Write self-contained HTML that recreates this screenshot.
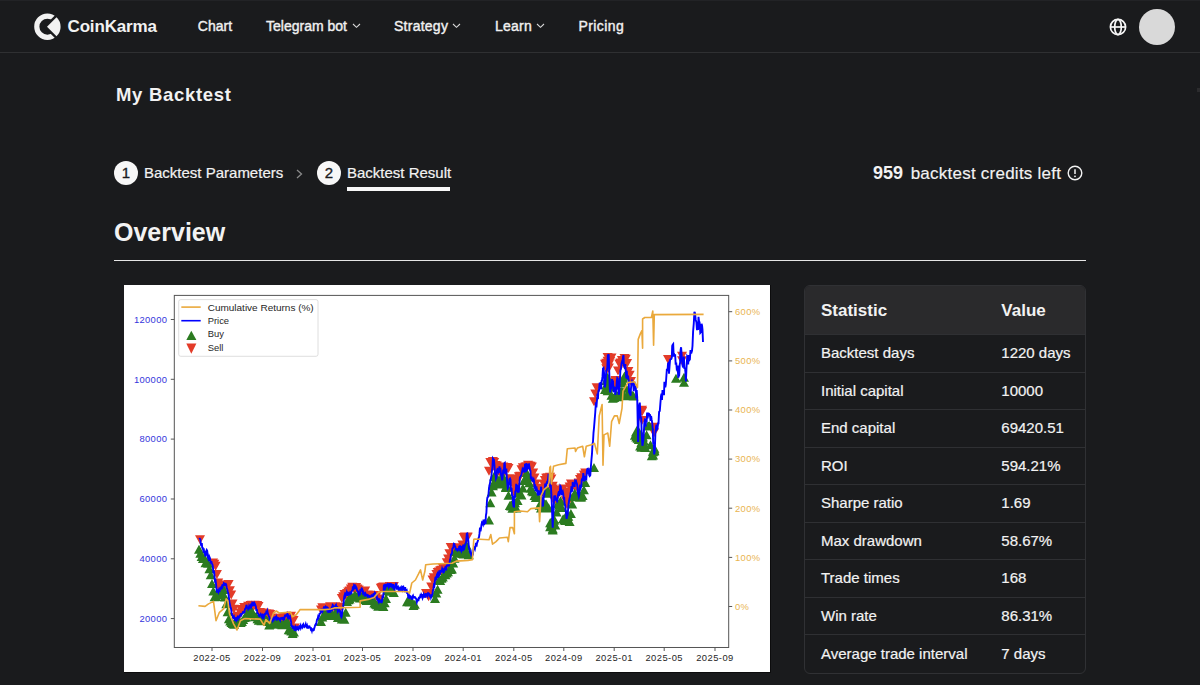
<!DOCTYPE html>
<html><head><meta charset="utf-8">
<style>
*{margin:0;padding:0;box-sizing:border-box}
html,body{width:1200px;height:685px;overflow:hidden;background:#1a1b1d;font-family:"Liberation Sans",sans-serif;color:#f2f2f2}
.abs{position:absolute;white-space:nowrap}
#hdr{position:absolute;left:0;top:0;width:1200px;height:53px;border-bottom:1px solid #2f3032}
.nav{position:absolute;top:18.2px;font-size:14px;line-height:17px;color:#f0f0f0;-webkit-text-stroke:0.4px #f0f0f0}
.chev{position:absolute;top:23px;width:9px;height:6px}
.step{position:absolute;width:24px;height:24px;border-radius:50%;background:#f7f7f7;color:#1a1b1d;font-size:15px;line-height:24px;text-align:center;-webkit-text-stroke:0.35px #1a1b1d}
table{position:absolute;left:804px;top:285px;width:282px;height:386px;border-collapse:separate;border-spacing:0;border:1px solid #303134;border-radius:6px;overflow:hidden}
td,th{text-align:left;border-bottom:1px solid #2f3033;font-size:15px;height:37.5px;padding:0 0 1px 16px;color:#f2f2f2}
td{-webkit-text-stroke:0.2px #f2f2f2}
th{background:#2a2a2c;height:49px;font-size:17px;font-weight:bold;padding-top:2px}
tr:last-child td{border-bottom:none}
td.v,th.v{padding-left:0}
</style></head><body>
<div id="hdr"><div class="abs" style="left:0;top:0;width:1200px;height:1px;background:#222326"></div>
  <svg class="abs" style="left:33px;top:12px" width="30" height="30" viewBox="33 12 30 30">
    <circle cx="47.4" cy="26.7" r="10.6" fill="none" stroke="#f2f2f2" stroke-width="5.2"/>
    <path d="M43.6 26.7L63 7.3V46.1Z" fill="#1a1b1d"/>
    <path d="M47 26.7L56.53 17.17A13.2 13.2 0 0 1 56.53 36.23Z" fill="#f2f2f2"/>
  </svg>
  <div class="abs" style="left:67.5px;top:16px;font-size:17px;font-weight:bold;line-height:22px;color:#f2f2f2;letter-spacing:-0.15px">CoinKarma</div>
  <div class="nav abs" style="left:197.8px">Chart</div>
  <div class="nav abs" style="left:266px">Telegram bot</div>
  <svg class="chev" style="left:352px" viewBox="0 0 9 6"><path d="M1 1L4.5 4.3L8 1" fill="none" stroke="#d8d8d8" stroke-width="1.1"/></svg>
  <div class="nav abs" style="left:394px;letter-spacing:0.25px">Strategy</div>
  <svg class="chev" style="left:452px" viewBox="0 0 9 6"><path d="M1 1L4.5 4.3L8 1" fill="none" stroke="#d8d8d8" stroke-width="1.1"/></svg>
  <div class="nav abs" style="left:495px;letter-spacing:0.25px">Learn</div>
  <svg class="chev" style="left:536px" viewBox="0 0 9 6"><path d="M1 1L4.5 4.3L8 1" fill="none" stroke="#d8d8d8" stroke-width="1.1"/></svg>
  <div class="nav abs" style="left:578.5px;letter-spacing:0.4px">Pricing</div>
  <svg class="abs" style="left:1107.5px;top:16.6px" width="20" height="20" viewBox="0 0 20 20" fill="none" stroke="#f7f7f7" stroke-width="1.7">
    <circle cx="10" cy="10" r="7.6"/><path d="M2.4 10H17.6"/><ellipse cx="10" cy="10" rx="3.3" ry="7.6"/>
  </svg>
  <div class="abs" style="left:1138.5px;top:8.6px;width:36px;height:36px;border-radius:50%;background:#d9d9d9"></div>
</div>

<div class="abs" style="left:116px;top:83.6px;font-size:18.5px;line-height:22px;font-weight:bold;letter-spacing:0.7px">My Backtest</div>

<div class="step" style="left:114px;top:161px">1</div>
<div class="abs" style="left:144px;top:164px;font-size:15px;line-height:18px;-webkit-text-stroke:0.2px #f2f2f2">Backtest Parameters</div>
<svg class="abs" style="left:295px;top:169px" width="9" height="10" viewBox="0 0 9 10"><path d="M2 1L6.5 5L2 9" fill="none" stroke="#8a8a8a" stroke-width="1.3"/></svg>
<div class="step" style="left:317px;top:161px">2</div>
<div class="abs" style="left:347px;top:164px;font-size:15px;line-height:18px;-webkit-text-stroke:0.2px #f2f2f2">Backtest Result</div>
<div class="abs" style="left:347px;top:187px;width:103px;height:4px;background:#f7f7f7"></div>

<div class="abs" style="left:873px;top:163px;font-size:17px;line-height:20px"><b style="font-size:18px">959</b><span style="letter-spacing:0.24px;margin-left:7.6px;-webkit-text-stroke:0.15px #f2f2f2">backtest credits left</span></div>
<svg class="abs" style="left:1067px;top:165px" width="16" height="16" viewBox="0 0 16 16"><circle cx="8" cy="8" r="6.8" fill="none" stroke="#f2f2f2" stroke-width="1.4"/><path d="M8 4.3V9" stroke="#f2f2f2" stroke-width="1.5"/><circle cx="8" cy="11.3" r="0.9" fill="#f2f2f2"/></svg>

<div class="abs" style="left:114px;top:217px;font-size:25px;line-height:30px;font-weight:bold">Overview</div>
<div class="abs" style="left:114px;top:259.5px;width:972px;height:1.5px;background:#e6e6e6"></div>

<div class="abs" style="left:124px;top:285px;width:647px;height:388.4px;background:#0c0c0d"></div>
<svg id="chart" class="abs" style="left:124px;top:285px" width="646" height="387.4" viewBox="124 285 646 387.4">
<rect x="124" y="285" width="646" height="387.4" fill="#fff"/>
<path fill="#e33b28" d="M195 535.2h10l-5 9ZM208 558.4h10l-5 9ZM209.3 559.8h10l-5 9ZM210.6 561.8h10l-5 9ZM211.9 570.1h10l-5 9ZM213.2 578.4h10l-5 9ZM214.5 583.9h10l-5 9ZM215.8 583.2h10l-5 9ZM217.1 582.4h10l-5 9ZM218.4 580.6h10l-5 9ZM219.7 581.5h10l-5 9ZM221 581.2h10l-5 9ZM222.3 580.6h10l-5 9ZM223.6 580.1h10l-5 9ZM224.9 586.2h10l-5 9ZM226.2 590.4h10l-5 9ZM227.5 599.5h10l-5 9ZM228.8 604.7h10l-5 9ZM230.1 613h10l-5 9ZM231.4 613.4h10l-5 9ZM232.7 612.8h10l-5 9ZM234 611.7h10l-5 9ZM235.3 608.4h10l-5 9ZM236.6 605.9h10l-5 9ZM237.9 605.1h10l-5 9ZM239.2 603h10l-5 9ZM240.5 603.4h10l-5 9ZM241.8 604.4h10l-5 9ZM243.1 601.7h10l-5 9ZM244.4 602h10l-5 9ZM245.7 601.1h10l-5 9ZM247 600.7h10l-5 9ZM248.3 602h10l-5 9ZM249.6 600.8h10l-5 9ZM250.9 601h10l-5 9ZM252.2 601h10l-5 9ZM253.5 601.9h10l-5 9ZM254.8 608.1h10l-5 9ZM256.1 609.3h10l-5 9ZM257.4 611.9h10l-5 9ZM258.7 608.4h10l-5 9ZM260 610.2h10l-5 9ZM261.3 609.2h10l-5 9ZM262.6 611.2h10l-5 9ZM263.9 609.6h10l-5 9ZM265.2 609.9h10l-5 9ZM266.5 615.3h10l-5 9ZM267.8 613.4h10l-5 9ZM269.1 614.1h10l-5 9ZM270.4 614.9h10l-5 9ZM271.7 615.1h10l-5 9ZM273 615.5h10l-5 9ZM274.3 614.7h10l-5 9ZM275.6 615.9h10l-5 9ZM276.9 615.3h10l-5 9ZM278.2 613.2h10l-5 9ZM279.5 612.8h10l-5 9ZM280.8 612.2h10l-5 9ZM282.1 614.6h10l-5 9ZM283.4 612.8h10l-5 9ZM284.7 614.2h10l-5 9ZM286 611.7h10l-5 9ZM287.3 615.7h10l-5 9ZM288.6 616h10l-5 9ZM289.9 623.6h10l-5 9ZM316 605.6h10l-5 9ZM317.3 603.3h10l-5 9ZM318.6 603.6h10l-5 9ZM319.9 605.6h10l-5 9ZM321.2 604h10l-5 9ZM322.5 604h10l-5 9ZM323.8 604.8h10l-5 9ZM325.1 602.3h10l-5 9ZM326.4 605.3h10l-5 9ZM327.7 602.8h10l-5 9ZM329 602.2h10l-5 9ZM330.3 602.3h10l-5 9ZM331.6 603h10l-5 9ZM332.9 603.1h10l-5 9ZM334.2 605.5h10l-5 9ZM335.5 602.8h10l-5 9ZM336.8 594h10l-5 9ZM338.1 592.2h10l-5 9ZM339.4 590h10l-5 9ZM340.7 591.2h10l-5 9ZM342 589h10l-5 9ZM343.3 587.6h10l-5 9ZM344.6 586.4h10l-5 9ZM345.9 584.4h10l-5 9ZM347.2 582.7h10l-5 9ZM348.5 583h10l-5 9ZM349.8 586.1h10l-5 9ZM351.1 583.1h10l-5 9ZM352.4 584.4h10l-5 9ZM353.7 585.5h10l-5 9ZM355 589h10l-5 9ZM356.3 588.9h10l-5 9ZM357.6 588.4h10l-5 9ZM358.9 587.9h10l-5 9ZM360.2 586.4h10l-5 9ZM361.5 590.4h10l-5 9ZM362.8 590.5h10l-5 9ZM364.1 590.7h10l-5 9ZM365.4 591.9h10l-5 9ZM366.7 591.3h10l-5 9ZM368 593.5h10l-5 9ZM369.3 591.4h10l-5 9ZM370.6 591.5h10l-5 9ZM371.9 591.1h10l-5 9ZM373.2 594.4h10l-5 9ZM374.5 596.8h10l-5 9ZM375.8 583.8h10l-5 9ZM377.1 582.9h10l-5 9ZM378.4 582.4h10l-5 9ZM379.7 582.9h10l-5 9ZM381 583.8h10l-5 9ZM382.3 584.2h10l-5 9ZM383.6 582.4h10l-5 9ZM384.9 582h10l-5 9ZM386.2 582.9h10l-5 9ZM387.5 583.5h10l-5 9ZM388.8 582h10l-5 9ZM421 589h10l-5 9ZM422.3 590.2h10l-5 9ZM423.6 592.2h10l-5 9ZM424.9 589.1h10l-5 9ZM426.2 582.4h10l-5 9ZM427.5 575.5h10l-5 9ZM428.8 573.2h10l-5 9ZM430.1 573.2h10l-5 9ZM431.4 569.9h10l-5 9ZM432.7 568h10l-5 9ZM434 567.6h10l-5 9ZM435.3 566.3h10l-5 9ZM436.6 565.7h10l-5 9ZM437.9 563.7h10l-5 9ZM439.2 563.6h10l-5 9ZM440.5 564.1h10l-5 9ZM441.8 558.2h10l-5 9ZM443.1 554.4h10l-5 9ZM444.4 549.2h10l-5 9ZM445.7 543.1h10l-5 9ZM447 544h10l-5 9ZM448.3 544.1h10l-5 9ZM449.6 543.9h10l-5 9ZM450.9 544.5h10l-5 9ZM452.2 545h10l-5 9ZM453.5 543.8h10l-5 9ZM454.8 543.2h10l-5 9ZM456.1 544.4h10l-5 9ZM457.4 540.6h10l-5 9ZM458.7 533.1h10l-5 9ZM460 532.5h10l-5 9ZM461.3 534.1h10l-5 9ZM461.3 534.7h10l-5 9ZM462.6 532.4h10l-5 9ZM462.6 532.9h10l-5 9ZM484 466.7h10l-5 9ZM485.3 458h10l-5 9ZM486.6 460.1h10l-5 9ZM487.9 462.3h10l-5 9ZM487.9 457h10l-5 9ZM489.2 458.1h10l-5 9ZM489.2 461h10l-5 9ZM490.5 462.5h10l-5 9ZM490.5 460.9h10l-5 9ZM491.8 461.5h10l-5 9ZM493.1 466.9h10l-5 9ZM494.4 465.3h10l-5 9ZM494.4 467.3h10l-5 9ZM495.7 467.1h10l-5 9ZM495.7 464.8h10l-5 9ZM497 466.3h10l-5 9ZM497 464.4h10l-5 9ZM498.3 464.8h10l-5 9ZM498.3 462.5h10l-5 9ZM499.6 465.4h10l-5 9ZM499.6 466.5h10l-5 9ZM500.9 464.6h10l-5 9ZM500.9 466.2h10l-5 9ZM502.2 463.1h10l-5 9ZM503.5 464.1h10l-5 9ZM504.8 474.2h10l-5 9ZM506.1 477.9h10l-5 9ZM506.1 475.6h10l-5 9ZM507.4 478.2h10l-5 9ZM507.4 477.7h10l-5 9ZM508.7 479.7h10l-5 9ZM508.7 487.3h10l-5 9ZM510 487.9h10l-5 9ZM510 482.6h10l-5 9ZM511.3 482.7h10l-5 9ZM512.6 474.8h10l-5 9ZM513.9 472.3h10l-5 9ZM515.2 471.8h10l-5 9ZM516.5 465.3h10l-5 9ZM517.8 463.2h10l-5 9ZM519.1 464h10l-5 9ZM520.4 462.5h10l-5 9ZM521.7 462.3h10l-5 9ZM523 460.8h10l-5 9ZM524.3 461.6h10l-5 9ZM525.6 461.7h10l-5 9ZM526.9 462.5h10l-5 9ZM528.2 468.6h10l-5 9ZM529.5 473.6h10l-5 9ZM530.8 479.5h10l-5 9ZM532.1 484.1h10l-5 9ZM533.4 483.8h10l-5 9ZM534.7 486.2h10l-5 9ZM536 487.5h10l-5 9ZM536 487.6h10l-5 9ZM537.3 487.8h10l-5 9ZM537.3 487.9h10l-5 9ZM538.6 479.4h10l-5 9ZM538.6 487.5h10l-5 9ZM539.9 476h10l-5 9ZM541.2 473.7h10l-5 9ZM542.5 473.2h10l-5 9ZM542.5 475h10l-5 9ZM543.8 475.5h10l-5 9ZM545.1 472.8h10l-5 9ZM545.1 476h10l-5 9ZM546.4 474.5h10l-5 9ZM546.4 474.6h10l-5 9ZM546.4 482.6h10l-5 9ZM547.7 484.6h10l-5 9ZM547.7 481.7h10l-5 9ZM547.7 487.2h10l-5 9ZM549 494.4h10l-5 9ZM549 488.5h10l-5 9ZM549 495.9h10l-5 9ZM550.3 495.3h10l-5 9ZM551.6 488.3h10l-5 9ZM552.9 485.8h10l-5 9ZM554.2 486.8h10l-5 9ZM555.5 485.6h10l-5 9ZM555.5 486.2h10l-5 9ZM556.8 486.8h10l-5 9ZM558.1 484.5h10l-5 9ZM559.4 487.8h10l-5 9ZM560.7 492h10l-5 9ZM560.7 496.2h10l-5 9ZM562 494.3h10l-5 9ZM562 500h10l-5 9ZM563.3 487.8h10l-5 9ZM564.6 482.6h10l-5 9ZM565.9 479.6h10l-5 9ZM567.2 479.4h10l-5 9ZM568.5 480.7h10l-5 9ZM569.8 481.7h10l-5 9ZM571.1 479.8h10l-5 9ZM572.4 483.8h10l-5 9ZM573.7 480.9h10l-5 9ZM573.7 478.6h10l-5 9ZM575 474.9h10l-5 9ZM576.3 473.2h10l-5 9ZM577.6 473.4h10l-5 9ZM578.9 470.6h10l-5 9ZM580.2 468.6h10l-5 9ZM589 397.3h10l-5 9ZM590.3 389.4h10l-5 9ZM591.6 383.3h10l-5 9ZM600 359.7h10l-5 9ZM601.3 358.7h10l-5 9ZM601.3 364.2h10l-5 9ZM601.3 364.3h10l-5 9ZM602.6 364.2h10l-5 9ZM602.6 360.7h10l-5 9ZM602.6 356.7h10l-5 9ZM602.6 353.1h10l-5 9ZM603.9 363.5h10l-5 9ZM603.9 360.3h10l-5 9ZM603.9 358.5h10l-5 9ZM605.2 355.2h10l-5 9ZM605.2 357.1h10l-5 9ZM606.5 353.4h10l-5 9ZM607.8 381.6h10l-5 9ZM609.1 380.2h10l-5 9ZM610.4 376.1h10l-5 9ZM610.4 377.5h10l-5 9ZM611.7 382h10l-5 9ZM611.7 376.8h10l-5 9ZM613 366.4h10l-5 9ZM614.3 359.5h10l-5 9ZM615.6 359.9h10l-5 9ZM615.6 358.5h10l-5 9ZM616.9 355.9h10l-5 9ZM618.2 358.2h10l-5 9ZM618.2 357.2h10l-5 9ZM619.5 354h10l-5 9ZM620.8 354.8h10l-5 9ZM622.1 359h10l-5 9ZM623.4 367h10l-5 9ZM624.7 370.7h10l-5 9ZM626 377.1h10l-5 9ZM637 415.9h10l-5 9ZM637 407h10l-5 9ZM637 407.6h10l-5 9ZM637 405.7h10l-5 9ZM649 428.4h10l-5 9ZM649 424.2h10l-5 9ZM649 422.7h10l-5 9ZM663 355h10l-5 9ZM677 356.3h10l-5 9ZM677 351.7h10l-5 9Z"/>
<path fill="#2b7b20" d="M194 553.7h10l-5 -9ZM195.3 557.8h10l-5 -9ZM196.6 561.1h10l-5 -9ZM197.9 563.1h10l-5 -9ZM199.2 561.9h10l-5 -9ZM200.5 567.2h10l-5 -9ZM201.8 567h10l-5 -9ZM203.1 567.8h10l-5 -9ZM204.4 573.2h10l-5 -9ZM205.7 579.3h10l-5 -9ZM207 588.1h10l-5 -9ZM208.3 595.6h10l-5 -9ZM209.6 601.3h10l-5 -9ZM210.9 601h10l-5 -9ZM212.2 598.4h10l-5 -9ZM213.5 599.6h10l-5 -9ZM214.8 599.5h10l-5 -9ZM216.1 598.9h10l-5 -9ZM217.4 599.1h10l-5 -9ZM218.7 594.1h10l-5 -9ZM220 601.6h10l-5 -9ZM221.3 608.2h10l-5 -9ZM222.6 616.2h10l-5 -9ZM223.9 623.2h10l-5 -9ZM225.2 625.5h10l-5 -9ZM226.5 626.9h10l-5 -9ZM227.8 627.9h10l-5 -9ZM229.1 628.8h10l-5 -9ZM230.4 626.7h10l-5 -9ZM231.7 625.8h10l-5 -9ZM233 626.2h10l-5 -9ZM234.3 626.7h10l-5 -9ZM235.6 626.9h10l-5 -9ZM236.9 626h10l-5 -9ZM238.2 624h10l-5 -9ZM239.5 621.9h10l-5 -9ZM240.8 621.4h10l-5 -9ZM242.1 618.3h10l-5 -9ZM243.4 615.3h10l-5 -9ZM244.7 615.6h10l-5 -9ZM246 615.1h10l-5 -9ZM247.3 616.4h10l-5 -9ZM248.6 619h10l-5 -9ZM249.9 621.2h10l-5 -9ZM251.2 620.8h10l-5 -9ZM252.5 623.3h10l-5 -9ZM253.8 624.7h10l-5 -9ZM255.1 624.2h10l-5 -9ZM256.4 625.3h10l-5 -9ZM257.7 623.6h10l-5 -9ZM259 624.5h10l-5 -9ZM260.3 623.7h10l-5 -9ZM261.6 624.6h10l-5 -9ZM262.9 626h10l-5 -9ZM264.2 629.5h10l-5 -9ZM265.5 628.8h10l-5 -9ZM266.8 626.7h10l-5 -9ZM268.1 627.7h10l-5 -9ZM269.4 628.5h10l-5 -9ZM270.7 627.8h10l-5 -9ZM272 628.6h10l-5 -9ZM273.3 627.7h10l-5 -9ZM274.6 627.2h10l-5 -9ZM275.9 628.7h10l-5 -9ZM277.2 629.3h10l-5 -9ZM278.5 628.7h10l-5 -9ZM279.8 628.4h10l-5 -9ZM281.1 627.6h10l-5 -9ZM282.4 626.3h10l-5 -9ZM283.7 634.3h10l-5 -9ZM285 634.5h10l-5 -9ZM286.3 635.6h10l-5 -9ZM287.6 638.1h10l-5 -9ZM288.9 636.5h10l-5 -9ZM316 626h10l-5 -9ZM317.3 621.5h10l-5 -9ZM318.6 619.3h10l-5 -9ZM319.9 617.5h10l-5 -9ZM321.2 619.4h10l-5 -9ZM322.5 620.1h10l-5 -9ZM323.8 617.9h10l-5 -9ZM325.1 620.1h10l-5 -9ZM326.4 620h10l-5 -9ZM327.7 618.9h10l-5 -9ZM329 619.8h10l-5 -9ZM330.3 617.4h10l-5 -9ZM331.6 617.6h10l-5 -9ZM332.9 621.9h10l-5 -9ZM334.2 621.4h10l-5 -9ZM335.5 621.6h10l-5 -9ZM336.8 623.5h10l-5 -9ZM338.1 623.2h10l-5 -9ZM339.4 623.8h10l-5 -9ZM340.7 616.8h10l-5 -9ZM342 606.1h10l-5 -9ZM343.3 604.2h10l-5 -9ZM344.6 603.4h10l-5 -9ZM345.9 600.4h10l-5 -9ZM347.2 601.8h10l-5 -9ZM348.5 601.8h10l-5 -9ZM349.8 599.7h10l-5 -9ZM351.1 600.8h10l-5 -9ZM352.4 601.8h10l-5 -9ZM353.7 600.7h10l-5 -9ZM355 602.4h10l-5 -9ZM356.3 601.7h10l-5 -9ZM357.6 600.1h10l-5 -9ZM358.9 602.9h10l-5 -9ZM360.2 604.1h10l-5 -9ZM361.5 605.1h10l-5 -9ZM362.8 604.5h10l-5 -9ZM364.1 603.8h10l-5 -9ZM365.4 604.8h10l-5 -9ZM366.7 605h10l-5 -9ZM368 604.1h10l-5 -9ZM369.3 607.4h10l-5 -9ZM370.6 608.5h10l-5 -9ZM371.9 609.2h10l-5 -9ZM373.2 610.7h10l-5 -9ZM374.5 608.5h10l-5 -9ZM375.8 610.1h10l-5 -9ZM377.1 610h10l-5 -9ZM378.4 610.9h10l-5 -9ZM379.7 607.3h10l-5 -9ZM381 602.9h10l-5 -9ZM382.3 594.2h10l-5 -9ZM383.6 595.3h10l-5 -9ZM384.9 595.4h10l-5 -9ZM386.2 595.8h10l-5 -9ZM387.5 594.5h10l-5 -9ZM388.8 596.9h10l-5 -9ZM402 606.3h10l-5 -9ZM403.3 604.4h10l-5 -9ZM404.6 606.5h10l-5 -9ZM405.9 606.4h10l-5 -9ZM407.2 606.6h10l-5 -9ZM408.5 609.9h10l-5 -9ZM409.8 608.7h10l-5 -9ZM430 603.1h10l-5 -9ZM431.3 597.6h10l-5 -9ZM432.6 593.7h10l-5 -9ZM433.9 584.4h10l-5 -9ZM435.2 585.1h10l-5 -9ZM436.5 582.7h10l-5 -9ZM437.8 581.6h10l-5 -9ZM439.1 579.1h10l-5 -9ZM440.4 579.3h10l-5 -9ZM441.7 577.5h10l-5 -9ZM443 576.2h10l-5 -9ZM444.3 573.9h10l-5 -9ZM445.6 574h10l-5 -9ZM446.9 573.4h10l-5 -9ZM448.2 567.4h10l-5 -9ZM449.5 562.7h10l-5 -9ZM450.8 556h10l-5 -9ZM452.1 557.6h10l-5 -9ZM453.4 557.1h10l-5 -9ZM454.7 556.2h10l-5 -9ZM456 556.8h10l-5 -9ZM457.3 558h10l-5 -9ZM458.6 558.6h10l-5 -9ZM459.9 554.5h10l-5 -9ZM461.2 550.1h10l-5 -9ZM461.2 549.1h10l-5 -9ZM462.5 557.8h10l-5 -9ZM462.5 557.6h10l-5 -9ZM463.8 559.3h10l-5 -9ZM484 524.4h10l-5 -9ZM485.3 507.2h10l-5 -9ZM486.6 496.5h10l-5 -9ZM487.9 490.2h10l-5 -9ZM487.9 488.7h10l-5 -9ZM489.2 480.6h10l-5 -9ZM489.2 487h10l-5 -9ZM490.5 480.1h10l-5 -9ZM490.5 481.3h10l-5 -9ZM491.8 486.2h10l-5 -9ZM493.1 484.2h10l-5 -9ZM494.4 486.6h10l-5 -9ZM494.4 486.7h10l-5 -9ZM495.7 482.7h10l-5 -9ZM495.7 488.5h10l-5 -9ZM497 485h10l-5 -9ZM497 486h10l-5 -9ZM498.3 481.5h10l-5 -9ZM498.3 481.8h10l-5 -9ZM499.6 486.4h10l-5 -9ZM499.6 484.9h10l-5 -9ZM500.9 491.2h10l-5 -9ZM500.9 492h10l-5 -9ZM502.2 491.6h10l-5 -9ZM503.5 499.8h10l-5 -9ZM504.8 510.1h10l-5 -9ZM506.1 509.3h10l-5 -9ZM506.1 510.6h10l-5 -9ZM507.4 512.8h10l-5 -9ZM507.4 508.8h10l-5 -9ZM508.7 511.2h10l-5 -9ZM508.7 508.5h10l-5 -9ZM510 507.2h10l-5 -9ZM510 512.5h10l-5 -9ZM511.3 512.6h10l-5 -9ZM512.6 505h10l-5 -9ZM513.9 496.9h10l-5 -9ZM515.2 499.3h10l-5 -9ZM516.5 499.5h10l-5 -9ZM517.8 492.5h10l-5 -9ZM519.1 485h10l-5 -9ZM520.4 482.2h10l-5 -9ZM521.7 476.9h10l-5 -9ZM523 481.2h10l-5 -9ZM524.3 487.2h10l-5 -9ZM525.6 492.8h10l-5 -9ZM526.9 495.3h10l-5 -9ZM528.2 496.3h10l-5 -9ZM529.5 500.1h10l-5 -9ZM530.8 502.1h10l-5 -9ZM532.1 502h10l-5 -9ZM533.4 502h10l-5 -9ZM534.7 509.7h10l-5 -9ZM536 512.4h10l-5 -9ZM536 506.8h10l-5 -9ZM537.3 510.2h10l-5 -9ZM537.3 508.2h10l-5 -9ZM538.6 507.6h10l-5 -9ZM538.6 509.9h10l-5 -9ZM539.9 508.3h10l-5 -9ZM541.2 508.6h10l-5 -9ZM542.5 494.6h10l-5 -9ZM542.5 497.8h10l-5 -9ZM543.8 512.5h10l-5 -9ZM545.1 527.2h10l-5 -9ZM545.1 531.3h10l-5 -9ZM546.4 526.3h10l-5 -9ZM546.4 528.3h10l-5 -9ZM546.4 530.3h10l-5 -9ZM547.7 527.5h10l-5 -9ZM547.7 534.4h10l-5 -9ZM547.7 533.2h10l-5 -9ZM549 523.7h10l-5 -9ZM549 523.5h10l-5 -9ZM549 524.8h10l-5 -9ZM550.3 529.6h10l-5 -9ZM551.6 516.4h10l-5 -9ZM552.9 508h10l-5 -9ZM554.2 509.5h10l-5 -9ZM555.5 505.3h10l-5 -9ZM555.5 505.7h10l-5 -9ZM556.8 511.9h10l-5 -9ZM558.1 523.2h10l-5 -9ZM559.4 524.6h10l-5 -9ZM560.7 521.7h10l-5 -9ZM560.7 525.1h10l-5 -9ZM562 518.4h10l-5 -9ZM562 521.1h10l-5 -9ZM563.3 520.8h10l-5 -9ZM564.6 525.9h10l-5 -9ZM565.9 518h10l-5 -9ZM567.2 508.6h10l-5 -9ZM568.5 501.3h10l-5 -9ZM569.8 497.6h10l-5 -9ZM571.1 501.2h10l-5 -9ZM572.4 500.6h10l-5 -9ZM573.7 498.2h10l-5 -9ZM573.7 499h10l-5 -9ZM575 501.8h10l-5 -9ZM576.3 501.6h10l-5 -9ZM577.6 499.9h10l-5 -9ZM578.9 494.3h10l-5 -9ZM580.2 486.9h10l-5 -9ZM589 472.1h10l-5 -9ZM600 393.9h10l-5 -9ZM601.3 391.3h10l-5 -9ZM601.3 384.9h10l-5 -9ZM601.3 389.2h10l-5 -9ZM602.6 393.1h10l-5 -9ZM602.6 393.1h10l-5 -9ZM602.6 381.7h10l-5 -9ZM602.6 395.3h10l-5 -9ZM603.9 386.1h10l-5 -9ZM603.9 390.3h10l-5 -9ZM603.9 388.3h10l-5 -9ZM605.2 391.5h10l-5 -9ZM605.2 387.6h10l-5 -9ZM606.5 399.7h10l-5 -9ZM607.8 402.7h10l-5 -9ZM609.1 402h10l-5 -9ZM610.4 401h10l-5 -9ZM610.4 400.5h10l-5 -9ZM611.7 399.3h10l-5 -9ZM611.7 400.4h10l-5 -9ZM613 401.2h10l-5 -9ZM614.3 398.5h10l-5 -9ZM615.6 399.4h10l-5 -9ZM615.6 396.3h10l-5 -9ZM616.9 395.6h10l-5 -9ZM618.2 387.2h10l-5 -9ZM618.2 382.8h10l-5 -9ZM619.5 380.5h10l-5 -9ZM620.8 392.8h10l-5 -9ZM622.1 400.3h10l-5 -9ZM623.4 397.7h10l-5 -9ZM624.7 397.3h10l-5 -9ZM626 400.1h10l-5 -9ZM627.3 399.8h10l-5 -9ZM628.6 400.5h10l-5 -9ZM629.9 439.7h10l-5 -9ZM631.2 441.4h10l-5 -9ZM631.2 436.5h10l-5 -9ZM631.2 436.1h10l-5 -9ZM631.2 438.6h10l-5 -9ZM632.5 433.7h10l-5 -9ZM632.5 442.7h10l-5 -9ZM632.5 440.1h10l-5 -9ZM633.8 443.9h10l-5 -9ZM635.1 450.4h10l-5 -9ZM636.4 440.8h10l-5 -9ZM636.4 451.8h10l-5 -9ZM636.4 440.4h10l-5 -9ZM636.4 446.7h10l-5 -9ZM637.7 441.1h10l-5 -9ZM637.7 450.6h10l-5 -9ZM637.7 441.9h10l-5 -9ZM639 445.5h10l-5 -9ZM639 449.1h10l-5 -9ZM639 450.6h10l-5 -9ZM640.3 452.1h10l-5 -9ZM641.6 439.2h10l-5 -9ZM642.9 430.5h10l-5 -9ZM644.2 429.9h10l-5 -9ZM645.5 449.3h10l-5 -9ZM646.8 460.3h10l-5 -9ZM648.1 456.3h10l-5 -9ZM648.1 455.5h10l-5 -9ZM648.1 459.4h10l-5 -9ZM649.4 454.4h10l-5 -9ZM649.4 452.7h10l-5 -9ZM649.4 455.5h10l-5 -9ZM671 382.7h10l-5 -9ZM679 381.7h10l-5 -9ZM679 386.8h10l-5 -9Z"/>
<polyline fill="none" stroke="#0000ff" stroke-width="1.9" stroke-linejoin="miter" points="199.2,538 199.7,538.6 200.3,539.2 200.8,543.6 201.3,546 201.8,543.1 202.2,547.7 202.7,547.8 203.2,550 203.7,548.3 204.2,552.7 204.6,550.8 205.1,554.8 205.6,556.5 206.1,551.7 206.7,550 207.2,550.9 208,558 208.5,558 208.9,561.1 209.4,556.9 209.9,558.1 210.4,561.2 210.8,563.7 211.3,561.3 211.8,563.7 212.4,564.4 212.9,567 213.4,573.1 214,570.6 214.5,576.5 215,581.3 215.6,580.7 216.1,584.6 216.9,592.6 217.4,590.4 218,590 218.5,591.8 219,590 219.5,591.9 219.9,587.7 220.4,589 220.9,587.8 221.4,588.3 221.9,586.5 222.3,587.1 222.8,584.1 223.3,586.2 223.8,583.2 224.3,583.6 224.7,585.8 225.2,583.9 225.7,583.8 226.2,584.6 226.8,588 227.3,589.4 227.8,591.8 228.4,593.7 228.9,597.4 229.4,602.1 230,604.8 230.5,607 231,608.5 231.6,612.7 232.1,615 232.6,615.8 233.1,618 233.5,618 234,616.7 234.5,618.3 235,620.7 235.5,617.3 235.9,618.9 236.4,620.7 236.9,619.9 237.4,617.7 237.8,618.5 238.3,615.8 238.8,617.8 239.3,617.6 239.7,616 240.2,615 240.7,616.3 241.1,613.3 241.6,614.6 242,613.7 242.5,613.2 242.9,612.1 243.4,611.9 243.9,612.6 244.5,612.2 245,609.2 245.5,608.4 245.9,608.5 246.4,604.9 246.9,606.3 247.4,607.4 247.8,607.3 248.3,609.2 248.8,608.5 249.2,606.1 249.7,607.3 250.2,606.3 250.7,607.2 251.1,603.5 251.6,605.2 252.1,603.3 252.6,604.4 253.1,602.7 253.5,602.6 254,606.2 254.5,603.3 254.9,604 255.4,605.4 255.9,606.8 256.4,611 256.8,609.1 257.3,613 257.8,613.1 258.3,613.8 258.8,615.7 259.2,615.7 259.7,616.2 260.2,614.8 260.7,614 261.1,614.9 261.6,614.9 262.1,617.5 262.6,618 263.1,614.7 263.5,615 264,616.7 264.5,614.7 264.9,613.9 265.4,614.3 265.9,614 266.3,611.7 266.8,612 267.3,610.7 267.8,613.5 268.2,614.3 268.7,615.8 269.2,616.9 269.7,619.4 270.1,619 270.6,619 271.1,620.2 271.6,620.5 272.1,620.6 272.5,617.3 273,620.4 273.5,619.2 273.9,619 274.4,616.7 274.9,618.5 275.4,617.2 275.9,617.7 276.3,616.9 276.8,619.7 277.3,619.6 277.8,617.8 278.2,618 278.7,618.8 279.2,618.7 279.6,619.7 280.1,620.5 280.6,618.4 281.1,618 281.6,618.5 282,618.2 282.5,619.2 283,619.6 283.5,616.9 283.9,620 284.4,618.2 284.9,615.5 285.3,615.3 285.8,615.8 286.3,615.1 286.7,615.2 287.2,614.1 287.7,617.4 288.1,618 288.6,615.8 289.1,616.6 289.6,617.6 290,616.8 290.5,619.6 291,621.2 291.5,626.2 292,626 292.4,626.2 292.9,628.9 293.4,626.7 293.8,626.6 294.3,629 294.8,630.7 295.2,628.9 295.7,627.2 296.2,628.7 296.7,626.5 297.2,628.4 297.6,630.1 298.1,628.1 298.6,629.3 299.1,628.4 299.5,626.4 300,626.6 300.5,625.5 300.9,627.8 301.4,626.6 301.9,626.2 302.4,627.1 302.8,625 303.3,624.3 303.8,626.5 304.3,627 304.8,626.2 305.2,625.8 305.7,624.3 306.2,626.5 306.6,627 307.1,625.7 307.6,627.7 308.1,627.9 308.6,627.4 309,626.3 309.5,626.4 310,627.6 310.4,627.7 310.9,629.6 311.4,629 311.9,630.7 312.4,628.5 312.9,630.3 313.3,630.4 313.8,630.1 314.3,628.1 314.8,626.6 315.2,625 315.7,624.1 316.2,624.3 316.7,621.1 317.1,619.2 317.6,619.1 318.1,616.7 318.6,617.6 319,616.3 319.5,613.8 320,613.6 320.4,613.3 320.9,611 321.4,608.6 321.8,610.9 322.3,611.7 322.7,610.7 323.2,610.1 323.6,608.4 324.1,606.6 324.5,609.1 325,607.3 325.6,606.5 326.2,607.3 326.7,609.1 327.1,610.2 327.6,607.8 328,608.2 328.5,609 328.9,612 329.4,611.9 329.9,610.2 330.3,612.6 330.8,609.7 331.3,608.6 331.8,611 332.2,609.4 332.7,605.1 333.2,605.6 333.7,607.5 334.2,608.6 334.7,607.3 335.2,606.2 335.7,607.5 336.2,605.8 336.7,607.9 337.2,606.1 337.7,611.1 338.2,610.1 338.7,610 339.2,612.4 339.7,610.6 340.2,611.4 340.8,616 341.4,617.2 341.8,616.1 342.3,610.6 342.8,608.1 343.2,606.7 343.8,600.4 344.3,596.2 344.8,594.5 345.3,595.9 345.8,593.8 346.2,594.2 346.7,592.3 347.2,593.9 347.7,595.9 348.2,592.8 348.7,593.2 349.2,593.7 349.7,595.2 350.2,592.4 350.7,592.7 351.1,594.2 351.6,591.3 352.1,590.7 352.5,589.9 352.9,586.4 353.4,588 353.9,585.9 354.3,586.9 354.8,584.4 355.2,589 355.7,585.7 356.1,587.6 356.6,588 357.1,590.6 357.5,591.1 358,591.3 358.4,593.7 358.9,595 359.4,594.1 359.9,594.2 360.3,589.4 360.8,590.7 361.3,589.2 361.8,588.5 362.3,589.3 362.8,592.7 363.3,591.9 363.8,592.9 364.3,594.6 364.8,593.9 365.3,596.3 365.7,594.1 366.2,595.2 366.6,594.8 367.1,595.1 367.6,596.3 368,595.3 368.5,595.9 368.9,595.9 369.4,596.2 369.9,598.4 370.3,597 370.8,597.8 371.3,598 371.8,594.3 372.2,595.8 372.7,597.7 373.2,597 373.6,593.2 374.1,595 374.6,593.5 375.1,595.7 375.6,594.3 376.1,595.7 376.6,595.4 377.1,599 377.6,598.6 378.1,600.5 378.6,601.6 379.1,598.3 379.6,601.6 380.1,601.8 380.6,599.7 381.1,602 381.6,602.3 382.1,601.2 382.5,595.7 383,597.9 383.5,593.9 383.8,585.7 384.3,585.1 384.7,585.6 385.2,588.4 385.6,587.6 386.1,583.8 386.6,585.3 387,585.8 387.5,584.8 387.9,584 388.4,584.7 388.8,586.9 389.3,585.7 389.8,583.1 390.3,586.2 390.8,585.7 391.2,583.4 391.7,585.3 392.2,587 392.7,586.5 393.2,584.1 393.7,589.3 394.1,588.3 394.6,589.4 395.1,586.9 395.6,585 396.1,586.2 396.5,585.3 397,589.6 397.5,587.1 398,586.7 398.4,588.6 398.9,591.6 399.4,589.6 399.9,591.3 400.4,588.1 400.9,587.4 401.4,591.5 401.8,589.5 402.3,590.2 402.8,586.7 403.3,586.5 403.8,588.8 404.3,590.1 404.8,588.9 405.2,587.2 405.7,592.2 406.2,590.8 406.7,590.3 407.2,593.9 407.6,592 408.1,596.1 408.6,598.2 409.1,594.3 409.6,598.7 410.1,596.9 410.6,596.5 411.1,597.6 411.6,597.9 412.1,599.8 412.6,596.4 413,595.7 413.5,597.7 414,597.6 414.5,597 415,597.1 415.4,598.1 415.9,598.3 416.4,599.8 416.9,602 417.4,600.3 417.9,599.5 418.4,601.1 418.8,598 419.3,598.3 419.8,597.6 420.3,595.8 420.8,596.5 421.3,594.6 421.8,595.6 422.2,594.2 422.7,597.8 423.2,596.7 423.7,594.6 424.2,596.1 424.7,595.6 425.2,597.7 425.7,593.1 426.2,596.5 426.6,594.1 427.1,594.1 427.6,595.6 428.1,593 428.6,593.2 429.1,593.7 429.6,595.2 430.1,597.2 430.5,594.3 431,597.4 431.5,596.1 432,595.5 432.5,593.4 432.9,590.5 433.4,588.5 433.9,585.1 434.4,585.9 434.9,580.9 435.4,577.6 435.9,577.2 436.4,578.1 436.9,574.8 437.4,573.7 437.9,572.8 438.3,576.8 438.8,576.5 439.3,574.8 439.8,572 440.3,572.8 440.8,570.7 441.3,570.6 441.7,571.1 442.2,568.7 442.7,570 443.2,568.4 443.6,572.2 444.1,571.8 444.6,568.4 445.1,568.4 445.6,566.2 446.1,570.4 446.6,565.9 447,565.9 447.5,563.3 448,565.4 448.5,565.7 449,565.5 449.5,563.6 450,559.7 450.4,559.7 450.9,554.4 451.4,554.2 451.9,553.8 452.4,548.5 452.9,548.2 453.4,546.5 453.9,543.8 454.4,544.1 454.9,546.6 455.3,546.6 455.8,549.5 456.3,549.4 456.8,549.1 457.3,550.2 457.8,549.1 458.2,549 458.7,549.6 459.2,546.5 459.7,546.2 460.2,546.2 460.7,551.3 461.2,546 461.7,550.5 462.2,549.4 462.7,549.7 463.2,544.7 463.6,549.6 464.1,549.2 464.6,546.6 465.1,545 465.7,543.8 466.2,541.5 466.8,533.6 467.3,533.4 467.9,537.6 468.4,541.4 468.9,547.8 469.5,549.4 470,552.2 470.5,553.1 470.9,552.2 471.4,555 471.9,554.3 472.4,553.8 472.9,554.1 473.4,549.9 474,547.4 474.5,547.1 475,548.6 475.5,546.1 476,542.8 476.5,546.5 477,543 477.5,542 478,540.4 478.5,538 479,537.1 479.5,533.4 480,527.5 480.5,531.3 481,528.7 481.5,524.6 482,522.3 482.5,522.8 483,524 483.5,519.6 484,525.1 484.5,521.6 485,520.4 485.5,524 485.9,515.5 486.4,512.8 486.9,501.8 487.3,497.8 487.8,497.1 488.3,496.5 488.9,489.3 489.4,485.5 489.9,483.8 490.4,480.1 490.9,478.6 491.4,475.9 491.9,471 492.4,467.7 492.9,458.5 493.4,459.3 493.9,459.6 494.4,464.5 495,473.2 495.5,472.8 496,478.5 496.5,477.4 497,470.3 497.5,469 498,469.3 498.5,471.5 499,470 499.5,466.3 500,470.8 500.6,469.9 501.1,474.9 501.7,477.2 502.2,480.3 502.7,476.5 503.2,469.6 503.8,473.7 504.3,463.3 504.8,462.8 505.3,471.1 505.8,474.1 506.3,468.6 506.8,476.4 507.3,483.3 507.8,488.2 508.3,487.3 508.9,483.9 509.4,479.2 510,478.5 510.5,479.8 511,490.6 511.5,487.9 512,495.2 512.5,495.3 513,502.7 513.5,506.5 514,506.6 514.4,495.7 514.9,498 515.3,491.4 515.8,491.1 516.2,483.8 516.7,487.4 517.2,484.8 517.8,492.7 518.3,490.6 518.8,492.5 519.4,482.9 519.9,477.4 520.5,476.8 521,475.7 521.5,474.3 522,471.9 522.5,469.3 523,470.3 523.5,469 524,469.8 524.5,472.6 525,463.7 525.5,470.5 526,470.8 526.4,463.1 526.9,470.5 527.4,467.8 527.9,469.1 528.4,464.5 528.9,464.2 529.5,466.9 530,470 530.5,471.1 530.9,479.2 531.4,477.4 531.8,477.4 532.3,480.9 532.8,481.1 533.2,480.6 533.7,479.4 534.1,480.8 534.6,488.6 535.1,484.4 535.5,491.3 536,488.2 536.5,487.7 537,489.7 537.6,493.8 538.1,495.5 538.6,491.2 539.1,491.4 539.6,495.2 540.1,493.1 540.6,491 541.1,486.7 541.6,494.2 542,503 542.5,505.7 543,505.5 543.6,498.1 544.2,495.6 544.7,489.6 545.2,483.6 545.8,488.1 546.4,483.7 546.9,482.3 547.5,482.9 548,480 548.5,474.8 549.1,475 549.6,475.1 550.2,487.8 550.8,484.8 551.3,492.6 551.8,504 552.2,514.7 552.7,527.6 553.2,515.3 553.7,508.2 554.2,495.5 554.7,500.7 555.2,495.3 555.7,499.8 556.1,497.6 556.6,500.8 557.1,501.3 557.6,498.5 558,494.7 558.5,492.8 559,491.4 559.4,495.8 559.9,490.3 560.3,486 560.8,486.7 561.3,492.4 561.8,495.1 562.2,492.1 562.7,491.3 563.2,493.7 563.7,498.4 564.2,498.2 564.7,503.8 565.2,505.1 565.6,509.8 566.1,513.4 566.6,518.8 567.1,516 567.6,515.2 568,510.7 568.5,504.5 569,501.1 569.5,498.4 570,496.8 570.4,493.6 570.9,491.5 571.4,487.1 571.8,487.2 572.3,491.8 572.7,482.1 573.2,483.8 573.7,483.7 574.1,484.8 574.6,486.9 575.1,480.7 575.6,481.1 576,480.8 576.5,483 577,484.1 577.4,486.6 577.9,493.3 578.3,494.4 578.8,496.6 579.2,495.3 579.7,487.8 580.2,484.7 580.8,487.8 581.3,486.4 581.8,479.5 582.3,478.7 582.8,479.3 583.3,473.2 583.8,476.5 584.3,481.1 584.8,479.6 585.3,476 585.8,478.7 586.3,479.1 586.8,471.3 587.3,469.2 587.8,468.9 588.3,471.8 588.8,470.8 589.2,475.2 589.7,476 590.3,475.1 590.8,467.8 591.4,460.3 592,453.7 592.5,444 593,441.6 593.5,432.9 594,428 594.6,420.6 595.3,412 595.9,402.4 596.4,407.5 597,400 597.5,393.6 597.9,399.3 598.4,391 598.9,390.9 599.5,384.5 600,385 600.5,382.3 601.1,389.3 601.6,380.9 602,380.7 602.5,376.4 603,368.5 603.5,368 604,372.3 604.4,383 604.9,387.4 605.4,384.2 605.8,377.4 606.3,371 606.8,370.4 607.3,367.7 607.8,355.5 608.2,355.5 608.7,354.2 609.2,370.3 609.7,387.4 610.2,392.4 610.6,387.4 611.1,389.5 611.6,383.3 612,379.2 612.5,381.7 613,380.6 613.5,392.1 614,391 614.4,388.1 614.9,386.7 615.4,395 615.9,390.7 616.3,388.8 616.8,381.2 617.3,378 617.8,378.6 618.2,387.7 618.7,394.8 619.2,393.1 619.8,381.3 620.4,370.5 621,368.5 621.5,363.4 622,361.7 622.5,362.4 623,357 623.5,355 623.9,365.6 624.4,367 624.9,366 625.3,364.2 625.8,370.4 626.3,378.1 626.8,370.7 627.2,378.9 627.7,376 628.2,376.7 628.7,380.9 629.1,392.2 629.6,393.1 630.1,388.9 630.5,395.7 631,388.3 631.5,382.7 631.9,381.6 632.4,383.6 632.9,383.2 633.4,387 633.8,391.3 634.3,381.6 634.8,385.4 635.3,387.4 635.8,386.1 636.2,398.2 636.7,390.1 637.2,397 638.1,442 638.7,418.2 639.3,404.8 639.8,402.6 640.2,409.7 640.7,418.8 641.2,417.2 641.8,435.8 642.4,445.8 642.9,442.8 643.3,440.2 643.8,433.9 644.3,423.4 644.8,420.8 645.2,418.5 645.6,426.7 646.1,421 646.6,422.4 647.1,412.5 647.6,418.4 648.1,413.6 648.6,413.5 649.1,413.9 649.5,415.3 650,415.2 650.5,421 651.1,416 651.7,420 652.3,423.4 652.8,429.5 653.2,443.9 653.7,442.6 654.2,454.4 654.8,450.3 655.4,432.9 656,427.1 656.5,424.7 657,429.3 657.5,428.6 658,423.4 658.5,423.4 659.1,411.9 659.8,411 660.4,403.2 661,396.1 661.5,393.8 662,399.9 662.5,390 663,391.4 663.5,392.4 664,395.2 664.4,381.8 664.9,384.4 665.3,387.4 665.8,384.6 666.2,378.8 666.9,368.8 667.5,371 668,363.7 668.5,363.1 669,373.7 669.5,367 670.1,359.7 670.8,359.1 671.3,359 671.8,357.6 672.2,346 672.7,344.7 673.2,344.1 673.7,356.5 674.2,354.2 674.7,355.2 675.2,355.2 675.7,364.7 676.2,362.5 676.7,368.3 677.2,367.2 677.7,365.6 678.2,377.6 678.7,376.2 679.2,375.3 679.7,364.9 680.1,362.8 680.6,350 681.1,347.2 681.6,354.1 682.1,361.4 682.6,365.7 683.2,367.4 683.9,356.5 684.4,369 684.9,367.5 685.4,371.9 685.9,381.5 686.5,368 687.2,356.5 687.7,357.4 688.2,364.4 688.7,355 689.2,360.4 689.9,359.5 690.5,350 691,352.4 691.5,352.6 692,350.9 692.5,346 693.1,331.5 693.8,323.3 694.4,311.8 695,313.1 695.7,319.7 696.4,322.2 697,330.2 697.5,325.8 698,329.9 698.5,316.9 699,321 699.6,322.4 700.3,332.9 701,332.1 701.6,323.7 702.1,326 702.5,329.5 703,342"/>
<polyline fill="none" stroke="#eaa93c" stroke-width="1.6" stroke-linejoin="round" points="198.4,605.7 205.1,606.4 208.5,603.9 213.5,601.4 216,620.7 219.4,612.3 223.6,609 226.1,598.9 227.8,600.6 229.5,614 233.7,624.1 237,630 240.4,620.7 243.7,619 245,618.6 260.2,619.1 264,625.3 265.9,619.6 269.7,623.4 273.5,613 276.3,611 279.2,613 290.5,612 292.4,616.7 296.2,614.8 299.1,611 300,609.6 325,609.6 330.9,609 334.4,607.9 360.1,607.3 360.1,600.9 369.4,599.1 374.1,597.4 378.8,592.1 383.5,591.5 399.8,591.5 408.1,591.8 409.6,593.2 411.8,583 415.4,580 418.4,574.2 420.5,569.9 422.7,580 424.9,571.3 425.7,564.7 433,564 452,563.3 456.3,561.1 468,560.4 472.4,559.6 473.8,539.2 475,539 489,539.8 490.8,534.6 492.5,544.2 496,541.6 499.5,538 507.4,537.2 508.3,541.6 510,527.6 512.7,527.6 514.4,533.7 514.4,511.8 520.5,511 527.5,511.8 530.8,508.6 538.9,507.9 539.6,521.8 541.1,495.5 544,489.6 547.6,486.7 549.1,482.3 549.8,467.7 550.5,466.3 551.3,483.8 553.5,466.3 558.6,464.8 565.9,463.4 567.3,448.8 575,448 575.6,451.5 577.4,448 582.7,446.3 584.4,456.8 586.2,446.3 592.3,444.5 594.5,443.4 597.3,453.9 599.2,415.9 602.1,404.5 603,465.2 604,434.9 607.8,433 609.7,446.3 611.6,421.6 614.4,415.9 617.3,415.9 619.2,423.5 622,408.3 623,391.2 628,382.5 634.6,381.8 637.5,387.6 638.2,339.4 640.4,333.6 641.9,330.7 642.6,348.2 642.6,319 644.8,317.5 651.4,317.5 652.8,311 653.6,345.3 654.3,314.6 703.6,314.4"/>
<rect x="174.3" y="295.4" width="554.4" height="352.1" fill="none" stroke="#555" stroke-width="1"/>
<path fill="none" stroke="#555" stroke-width="1" d="M170.8 618.6H174.3M170.8 558.8H174.3M170.8 499H174.3M170.8 439.1H174.3M170.8 379.3H174.3M170.8 319.5H174.3M728.7 606.5H732.2M728.7 557.4H732.2M728.7 508.2H732.2M728.7 459.1H732.2M728.7 410H732.2M728.7 360.9H732.2M728.7 311.7H732.2M212 647.5V651.0M262.5 647.5V651.0M313 647.5V651.0M362.5 647.5V651.0M413 647.5V651.0M463.2 647.5V651.0M513.8 647.5V651.0M563.8 647.5V651.0M614.2 647.5V651.0M664.2 647.5V651.0M715 647.5V651.0"/>
<g font-family="Liberation Sans" font-size="9.4"><text x="167.3" y="622" text-anchor="end" fill="#3535dc" letter-spacing="0.35">20000</text><text x="167.3" y="562.2" text-anchor="end" fill="#3535dc" letter-spacing="0.35">40000</text><text x="167.3" y="502.4" text-anchor="end" fill="#3535dc" letter-spacing="0.35">60000</text><text x="167.3" y="442.5" text-anchor="end" fill="#3535dc" letter-spacing="0.35">80000</text><text x="167.3" y="382.7" text-anchor="end" fill="#3535dc" letter-spacing="0.35">100000</text><text x="167.3" y="322.9" text-anchor="end" fill="#3535dc" letter-spacing="0.35">120000</text><text x="735" y="609.9" fill="#e9b450" letter-spacing="0.4">0%</text><text x="735" y="560.8" fill="#e9b450" letter-spacing="0.4">100%</text><text x="735" y="511.6" fill="#e9b450" letter-spacing="0.4">200%</text><text x="735" y="462.5" fill="#e9b450" letter-spacing="0.4">300%</text><text x="735" y="413.4" fill="#e9b450" letter-spacing="0.4">400%</text><text x="735" y="364.2" fill="#e9b450" letter-spacing="0.4">500%</text><text x="735" y="315.1" fill="#e9b450" letter-spacing="0.4">600%</text><text x="212" y="661" text-anchor="middle" fill="#262626" letter-spacing="0.45">2022-05</text><text x="262.5" y="661" text-anchor="middle" fill="#262626" letter-spacing="0.45">2022-09</text><text x="313" y="661" text-anchor="middle" fill="#262626" letter-spacing="0.45">2023-01</text><text x="362.5" y="661" text-anchor="middle" fill="#262626" letter-spacing="0.45">2023-05</text><text x="413" y="661" text-anchor="middle" fill="#262626" letter-spacing="0.45">2023-09</text><text x="463.2" y="661" text-anchor="middle" fill="#262626" letter-spacing="0.45">2024-01</text><text x="513.8" y="661" text-anchor="middle" fill="#262626" letter-spacing="0.45">2024-05</text><text x="563.8" y="661" text-anchor="middle" fill="#262626" letter-spacing="0.45">2024-09</text><text x="614.2" y="661" text-anchor="middle" fill="#262626" letter-spacing="0.45">2025-01</text><text x="664.2" y="661" text-anchor="middle" fill="#262626" letter-spacing="0.45">2025-05</text><text x="715" y="661" text-anchor="middle" fill="#262626" letter-spacing="0.45">2025-09</text></g>
<rect x="178.7" y="299.6" width="139.3" height="56.7" rx="2" fill="#fff" fill-opacity="0.8" stroke="#d5d5d5" stroke-width="0.8"/>
<path d="M181.3 307.1H200.7" stroke="#eaa93c" stroke-width="1.6"/>
<path d="M181.3 320.7H200.7" stroke="#0000ff" stroke-width="1.6"/>
<path d="M186.3 340L191.3 330.7L196.4 340Z" fill="#2b7b20"/>
<path d="M186.3 343.6L191.3 353.7L196.4 343.6Z" fill="#e33b28"/>
<g font-family="Liberation Sans" font-size="9.4" fill="#262626"><text x="207.7" y="310.7" textLength="106" lengthAdjust="spacingAndGlyphs">Cumulative Returns (%)</text><text x="207.7" y="324">Price</text><text x="207.7" y="337.3">Buy</text><text x="207.7" y="350.7">Sell</text></g>
</svg>

<table>
<tr><th>Statistic</th><th class="v">Value</th></tr>
<tr><td>Backtest days</td><td class="v">1220 days</td></tr>
<tr><td>Initial capital</td><td class="v">10000</td></tr>
<tr><td>End capital</td><td class="v">69420.51</td></tr>
<tr><td>ROI</td><td class="v">594.21%</td></tr>
<tr><td>Sharpe ratio</td><td class="v">1.69</td></tr>
<tr><td>Max drawdown</td><td class="v">58.67%</td></tr>
<tr><td>Trade times</td><td class="v">168</td></tr>
<tr><td>Win rate</td><td class="v">86.31%</td></tr>
<tr><td>Average trade interval</td><td class="v">7 days</td></tr>
</table>
<div class="abs" style="left:1197px;top:88px;width:3px;height:4px;background:#2c2c2e"></div>
</body></html>
